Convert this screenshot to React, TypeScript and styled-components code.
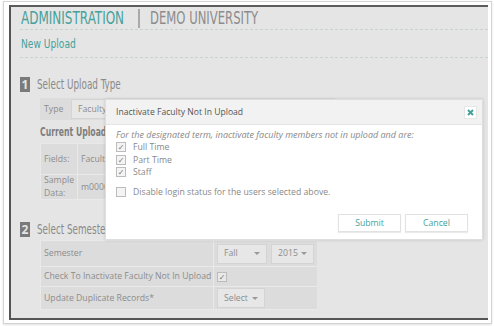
import React from 'react';
import styled, { createGlobalStyle } from 'styled-components';

const GlobalStyle = createGlobalStyle`
  html, body {
    margin: 0;
    padding: 0;
    background: #fff;
  }
  body {
    font-family: 'Open Sans', 'DejaVu Sans', sans-serif;
  }
`;

const TEAL = '#45a19b';

// narrow headline face: condensed DejaVu squeezed a bit more
const Cond = styled.span<{ $w: number; $scale: number; $color: string; $bold?: boolean }>`
  display: inline-block;
  width: ${(p) => p.$w}px;
  white-space: nowrap;
  font-family: 'DejaVu Sans Condensed', 'DejaVu Sans', sans-serif;
  font-weight: ${(p) => (p.$bold ? 'bold' : 'normal')};
  color: ${(p) => p.$color};

  & > span {
    display: inline-block;
    transform: scaleX(${(p) => p.$scale});
    transform-origin: left center;
  }
`;

const Page = styled.div`
  box-sizing: border-box;
  width: 494px;
  height: 326px;
  padding: 1px 2px 2px 3px;
`;

const Paper = styled.div`
  box-sizing: border-box;
  height: 100%;
  border: 1px solid #d4d4d4;
  box-shadow: 0 1px 2px rgba(0, 0, 0, 0.12);
  padding: 3px 3px 3px 5px;
`;

const Screen = styled.div`
  box-sizing: border-box;
  position: relative;
  height: 100%;
  overflow: hidden;
  background: #e5e5e5;
  border-left: 2px solid #555;
  border-top: 2px solid #5c5c5c;
  border-bottom: 2px solid #555;
`;

const Header = styled.div`
  display: flex;
  align-items: center;
  height: 22px;
  margin-left: 9px;
  padding-left: 1px;
  border-bottom: 1px dashed #c6d3d1;
  font-size: 17px;
`;

const Divider = styled.span`
  width: 2px;
  height: 19px;
  background: #a9a9a9;
  margin: 0 10px 0 14px;
`;

const SubHeader = styled.div`
  display: flex;
  align-items: center;
  height: 27px;
  margin-left: 9px;
  padding-left: 1px;
  border-bottom: 1px dashed #c6d3d1;
  font-size: 13px;
`;

const Section = styled.div<{ $top: number }>`
  margin: ${(p) => p.$top}px 0 0 9px;
`;

const SectionTitle = styled.div`
  display: flex;
  align-items: center;
  gap: 7px;
  font-size: 14px;
`;

const Badge = styled.span`
  display: flex;
  align-items: center;
  justify-content: center;
  width: 10px;
  height: 15px;
  background: #7a7a7a;
  color: #e5e5e5;
  font-weight: bold;
  font-size: 12px;
`;

const SectionBody = styled.div`
  margin-left: 20px;
`;

const TypeRow = styled.div`
  display: flex;
  align-items: center;
  width: 295px;
  height: 22px;
  margin-top: 6px;
  padding: 2px;
  box-sizing: border-box;
  background: #dcdcdc;
  font-size: 8.7px;
  color: #8c8c8c;
`;

const TypeLabel = styled.span`
  width: 27px;
  padding-left: 2px;
`;

const Select = styled.span<{ $w?: number }>`
  display: flex;
  align-items: center;
  justify-content: space-between;
  box-sizing: border-box;
  height: 20px;
  width: ${(p) => (p.$w ? `${p.$w}px` : 'auto')};
  flex: ${(p) => (p.$w ? 'none' : '1')};
  padding: 0 6px;
  background: #e7e7e7;
  border: 1px solid #d4d4d4;
  color: #8c8c8c;
  font-size: 8.7px;
`;

const Caret = styled.span`
  width: 0;
  height: 0;
  border-left: 3px solid transparent;
  border-right: 3px solid transparent;
  border-top: 3px solid #999;
`;

const SubTitle = styled.div`
  margin-top: 3px;
  font-size: 13px;
  line-height: 16px;
`;

const Grid = styled.div<{ $cols: string; $rows: string; $w: number; $top: number }>`
  display: grid;
  grid-template-columns: ${(p) => p.$cols};
  grid-template-rows: ${(p) => p.$rows};
  width: ${(p) => p.$w}px;
  gap: 1px;
  padding: 1px;
  box-sizing: border-box;
  background: #e9e9e9;
  margin-top: ${(p) => p.$top}px;
`;

const Cell = styled.div`
  display: flex;
  align-items: center;
  gap: 4px;
  padding: 0 3px;
  background: #dcdcdc;
  color: #8c8c8c;
  font-size: 8.7px;
  line-height: 13px;
  white-space: nowrap;
  overflow: hidden;
`;

const Box = styled.span<{ $light?: boolean }>`
  display: inline-flex;
  align-items: center;
  justify-content: center;
  box-sizing: border-box;
  width: 10px;
  height: 10px;
  flex: none;
  border: 1px solid #bcbcbc;
  background: ${(p) => (p.$light ? '#f4f4f4' : '#e9e9e9')};
  color: #777;
  font-size: 8px;
  line-height: 1;
`;

const Modal = styled.div`
  position: absolute;
  left: 94px;
  top: 92px;
  width: 378px;
  height: 141px;
  box-sizing: border-box;
  background: #fff;
  border: 1px solid #dedede;
  box-shadow: 0 0 3px rgba(0, 0, 0, 0.15);
`;

const ModalHeader = styled.div`
  display: flex;
  align-items: center;
  justify-content: space-between;
  height: 24px;
  padding: 0 5px 0 10px;
  background: #f2f2f2;
  border-bottom: 1px solid #e4e4e4;
  font-size: 8.6px;
  color: #555;
`;

const Close = styled.span`
  display: flex;
  align-items: center;
  justify-content: center;
  width: 11px;
  height: 11px;
  background: #fff;
  border: 1px solid #e6e6e6;
`;

const ModalBody = styled.div`
  padding: 3px 10px 0;
  font-size: 8.7px;
  color: #888;
`;

const Intro = styled.div`
  font-style: italic;
  font-size: 9px;
  line-height: 13px;
`;

const CheckRow = styled.label<{ $gap?: number }>`
  display: flex;
  align-items: center;
  gap: 7px;
  height: 12.5px;
  margin-top: ${(p) => p.$gap ?? 0}px;
`;

const Footer = styled.div`
  display: flex;
  justify-content: flex-end;
  gap: 4px;
  padding: 16px 14px 0 0;
`;

const Button = styled.span`
  display: flex;
  align-items: center;
  justify-content: center;
  width: 63px;
  height: 18px;
  box-sizing: border-box;
  border: 1px solid #e2e2e2;
  box-shadow: 0 1px 1px rgba(0, 0, 0, 0.08);
  color: ${TEAL};
  font-size: 8.7px;
`;

const Check = () => <Box $light>✓</Box>;

const App = (): JSX.Element => (
  <Page>
    <GlobalStyle />
    <Paper>
      <Screen>
        <Header>
          <Cond $w={103} $scale={0.785} $color={TEAL}>
            <span>ADMINISTRATION</span>
          </Cond>
          <Divider />
          <Cond $w={110} $scale={0.76} $color="#8c8c8c">
            <span>DEMO UNIVERSITY</span>
          </Cond>
        </Header>
        <SubHeader>
          <Cond $w={56} $scale={0.78} $color={TEAL}>
            <span>New Upload</span>
          </Cond>
        </SubHeader>

        <Section $top={18}>
          <SectionTitle>
            <Badge>1</Badge>
            <Cond $w={84} $scale={0.7} $color="#8a8a8a">
              <span>Select Upload Type</span>
            </Cond>
          </SectionTitle>
          <SectionBody>
            <TypeRow>
              <TypeLabel>Type</TypeLabel>
              <Select>Faculty</Select>
            </TypeRow>
            <SubTitle>
              <Cond $w={72} $scale={0.66} $color="#7e7e7e" $bold>
                <span>Current Upload</span>
              </Cond>
            </SubTitle>
            <Grid $cols="36px 1fr" $rows="30px 24px" $w={295} $top={3}>
              <Cell>Fields:</Cell>
              <Cell>Faculty</Cell>
              <Cell>
                Sample
                <br />
                Data:
              </Cell>
              <Cell>m0000</Cell>
            </Grid>
          </SectionBody>
        </Section>

        <Section $top={21}>
          <SectionTitle>
            <Badge>2</Badge>
            <Cond $w={80} $scale={0.7} $color="#8a8a8a">
              <span>Select Semester</span>
            </Cond>
          </SectionTitle>
          <SectionBody>
            <Grid $cols="172px 103px" $rows="25px 19px 22px" $w={277} $top={3}>
              <Cell>Semester</Cell>
              <Cell>
                <Select $w={50}>
                  Fall <Caret />
                </Select>
                <Select $w={43}>
                  2015 <Caret />
                </Select>
              </Cell>
              <Cell>Check To Inactivate Faculty Not In Upload</Cell>
              <Cell>
                <Box>✓</Box>
              </Cell>
              <Cell>Update Duplicate Records*</Cell>
              <Cell>
                <Select $w={48}>
                  Select <Caret />
                </Select>
              </Cell>
            </Grid>
          </SectionBody>
        </Section>

        <Modal>
          <ModalHeader>
            Inactivate Faculty Not In Upload
            <Close>
              <svg width="7" height="7" viewBox="0 0 7 7">
                <path d="M1 1L6 6M6 1L1 6" stroke={TEAL} strokeWidth="2" />
              </svg>
            </Close>
          </ModalHeader>
          <ModalBody>
            <Intro>For the designated term, inactivate faculty members not in upload and are:</Intro>
            <CheckRow>
              <Check /> Full Time
            </CheckRow>
            <CheckRow>
              <Check /> Part Time
            </CheckRow>
            <CheckRow>
              <Check /> Staff
            </CheckRow>
            <CheckRow $gap={7}>
              <Box $light /> Disable login status for the users selected above.
            </CheckRow>
          </ModalBody>
          <Footer>
            <Button>Submit</Button>
            <Button>Cancel</Button>
          </Footer>
        </Modal>
      </Screen>
    </Paper>
  </Page>
);

export default App;
